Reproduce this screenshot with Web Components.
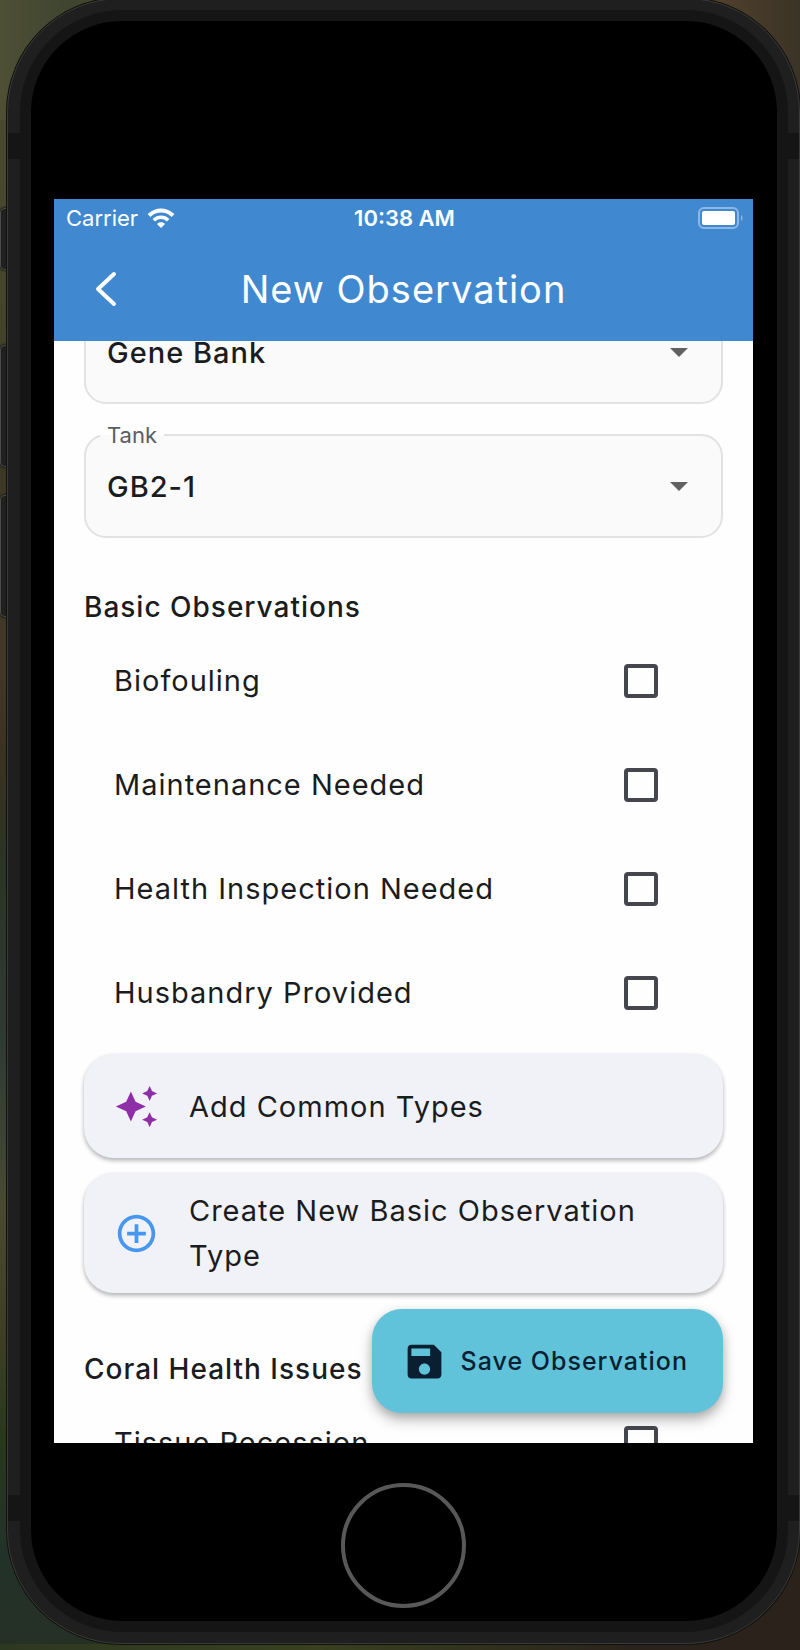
<!DOCTYPE html>
<html lang="en">
<head>
<meta charset="utf-8">
<meta name="viewport" content="width=device-width, initial-scale=1">
<title>New Observation</title>
<style>
  html { height: 100%; }
  body {
    margin: 0;
    height: 100%;
    overflow: hidden;
    font-family: Inter, "Noto Sans", sans-serif;
    color: #1b1c20;
  }
</style>
</head>
<body>
<phone-frame>
  <status-bar carrier="Carrier" time="10:38 AM"></status-bar>
  <app-header>New Observation</app-header>
  <observation-form>
    <select-field name="Structure" value="Gene Bank"></select-field>
    <select-field name="Tank" value="GB2-1" labelled></select-field>
    <form-section heading="Basic Observations">
      <check-row>Biofouling</check-row>
      <check-row>Maintenance Needed</check-row>
      <check-row>Health Inspection Needed</check-row>
      <check-row>Husbandry Provided</check-row>
      <action-card slot="actions">
        <svg slot="icon" viewBox="0 0 24 24" fill="#8e2fa8"><path d="M19 9l1.25-2.75L23 5l-2.750-1.250L19 1l-1.250 2.750L15 5l2.750 1.250L19 9zm-7.500.500L9 4 6.500 9.500 1 12l5.500 2.500L9 20l2.500-5.500L17 12l-5.500-2.500zM19 15l-1.250 2.750L15 19l2.750 1.250L19 23l1.250-2.750L23 19l-2.750-1.250L19 15z"/></svg>
        Add Common Types
      </action-card>
      <action-card slot="actions">
        <svg slot="icon" viewBox="0 0 24 24" fill="#4897ee"><path d="M13 7h-2v4H7v2h4v4h2v-4h4v-2h-4V7zm-1-5C6.480 2 2 6.480 2 12s4.480 10 10 10 10-4.480 10-10S17.520 2 12 2zm0 18c-4.410 0-8-3.590-8-8s3.590-8 8-8 8 3.590 8 8-3.590 8-8 8z"/></svg>
        Create New Basic Observation Type
      </action-card>
    </form-section>
    <form-section heading="Coral Health Issues">
      <check-row>Tissue Recession</check-row>
    </form-section>
  </observation-form>
  <save-button slot="floating">Save Observation</save-button>
</phone-frame>

<script>
  const define = (name, markup, setup) => {
    const template = document.createElement('template');
    template.innerHTML = markup;
    customElements.define(name, class extends HTMLElement {
      constructor() {
        super();
        this.attachShadow({ mode: 'open' }).append(template.content.cloneNode(true));
      }
      connectedCallback() {
        if (setup) setup(this, this.shadowRoot);
      }
    });
  };

  define('phone-frame', `
    <style>
      :host {
        display: grid;
        grid-template-columns: 7px minmax(0, 1fr);
        grid-template-rows: minmax(0, 1fr);
        box-sizing: border-box;
        height: 100vh;
        padding-bottom: 6px;
        background:
          linear-gradient(90deg, #2d3820, #38401f 40%, #2a221b 80%) bottom / 100% 6px no-repeat,
          linear-gradient(90deg, #4d5034 0, #3f4430 9%, transparent 16%) top / 100% 120px no-repeat,
          linear-gradient(90deg, transparent 78%, #55432c 87%, #3b3327 100%) top / 100% 120px no-repeat,
          linear-gradient(90deg, transparent 50%, #2a221b 50%),
          linear-gradient(#4a4b30, #45482d 16%, #3c3826 28%, #423828 40%, #3a3220 46%, #2c3424 52%, #2e3a34 63%, #484a32 73%, #3a3d24 82%, #26381c 88%, #22322a 94%, #263025);
      }
      .keys { display: flex; flex-direction: column; gap: 28px; padding-top: 208px; }
      .keys i {
        box-sizing: border-box; flex: none; height: 122px; width: 10px;
        background: #202020; border: 1px solid #4a4a48; border-right: 0;
        border-radius: 5px 0 0 5px; box-shadow: 0 0 2px 1px #1c1c14;
      }
      .keys .mute { height: 62px; margin-bottom: 47px; }
      .shell {
        position: relative; display: flex; box-sizing: border-box;
        margin-top: -2px; padding: 11px 11px 11px 12px;
        border: 1px solid #3a3a3a; border-radius: 114px;
        box-shadow: 0 0 0 1px #11120d;
        background:
          linear-gradient(#151515, #151515) 0 134px / 100% 26px no-repeat,
          linear-gradient(#151515, #151515) 0 calc(100% - 122px) / 100% 26px no-repeat,
          #1f1f1f;
      }
      .bezel {
        flex: 1; min-width: 0; display: flex; flex-direction: column;
        border: 11px solid #151515; border-radius: 102px; background: #000;
        padding: 178px 24px 0 23px;
      }
      .screen {
        position: relative; flex: 1; min-height: 0; overflow: hidden;
        display: flex; flex-direction: column; background: #fefefe;
      }
      .floating { position: absolute; right: 30px; bottom: 30px; }
      .chin { display: flex; justify-content: center; padding: 40px 0 13px; }
      .home {
        width: 125px; height: 125px; box-sizing: border-box; padding: 0;
        border: 4px solid #585858; border-radius: 50%; background: none;
      }
    </style>
    <div class="keys"><i class="mute"></i><i></i><i></i></div>
    <div class="shell">
      <div class="bezel">
        <main class="screen"><slot></slot><div class="floating"><slot name="floating"></slot></div></main>
        <div class="chin"><button class="home" aria-label="Home"></button></div>
      </div>
    </div>`);

  define('status-bar', `
    <style>
      :host {
        display: grid; grid-template-columns: 1fr auto 1fr; align-items: center;
        box-sizing: border-box; flex: none; height: 40px; padding: 0 10px 2px 12px;
        background: #4089d0; color: #fff; font-size: 22px; line-height: 28px;
      }
      .left { display: flex; align-items: center; gap: 9px; }
      .time { font-weight: 600; }
      svg { display: block; }
      .battery { justify-self: end; }
    </style>
    <div class="left"><span class="carrier"></span>
      <svg width="28" height="20" viewBox="0 0 28 20" fill="none" stroke="#fff">
        <path d="M2 7.500C9 .8 19 .8 26 7.500" stroke-width="4"/>
        <path d="M6.800 12.200c4.200-3.900 10.200-3.900 14.400 0" stroke-width="3.600"/>
        <path d="M14 20l-4-4c2-2.300 6-2.300 8 0z" fill="#fff" stroke="none"/>
      </svg>
    </div>
    <span class="time"></span>
    <svg class="battery" width="45" height="22" viewBox="0 0 45 22">
      <rect x="1" y="1" width="39" height="20" rx="5" fill="none" stroke="#8db8e3" stroke-width="2"/>
      <rect x="4" y="4" width="33" height="14" rx="2" fill="#fff"/>
      <path d="M43 8c2 1 2 5 0 6z" fill="#8db8e3"/>
    </svg>`, (host, root) => {
      root.querySelector('.carrier').textContent = host.getAttribute('carrier');
      root.querySelector('.time').textContent = host.getAttribute('time');
    });

  define('app-header', `
    <style>
      :host {
        display: grid; grid-template-columns: 104px 1fr 104px; align-items: center;
        box-sizing: border-box; flex: none; height: 102px; padding-bottom: 2px;
        background: #4089d0; color: #fff;
      }
      button { justify-self: center; padding: 0; border: 0; background: none; }
      svg { display: block; }
      h1 { margin: 0; text-align: center; font-size: 38px; line-height: 48px; font-weight: 400; letter-spacing: 1px; }
    </style>
    <button aria-label="Back"><svg width="24" height="36" viewBox="0 0 24 36" fill="none" stroke="#fff" stroke-width="4" stroke-linecap="round" stroke-linejoin="round"><path d="M20 3L4 18l16 15"/></svg></button>
    <h1><slot></slot></h1>`);

  define('observation-form', `
    <style>
      :host { display: block; flex: 1; min-height: 0; overflow: hidden; }
      form { display: flex; flex-direction: column; gap: 30px; margin-top: -41px; padding: 0 30px; }
    </style>
    <form><slot></slot></form>`);

  define('select-field', `
    <style>
      :host { display: block; position: relative; height: 104px; }
      select {
        appearance: none; box-sizing: border-box; width: 100%; height: 100%; margin: 0;
        padding: 2px 64px 0 21px; border: 2px solid #e2e2e2; border-radius: 22px;
        background: #fafafa; color: #1b1c20; font: 500 29px/36px Inter, sans-serif; letter-spacing: 1px;
      }
      label {
        position: absolute; left: 16px; top: -13px; padding: 0 7px;
        background: linear-gradient(#fefefe 50%, #fafafa 50%);
        color: #5a5d63; font-size: 22px; line-height: 28px;
      }
      label:empty { display: none; }
      svg { position: absolute; right: 35px; top: 48px; pointer-events: none; }
    </style>
    <select id="field"><option></option></select>
    <label for="field"></label>
    <svg width="18" height="9" viewBox="0 0 18 9"><path d="M0 0h18L9 9z" fill="#616161"/></svg>`, (host, root) => {
      root.querySelector('option').textContent = host.getAttribute('value');
      const name = host.getAttribute('name');
      if (host.hasAttribute('labelled')) root.querySelector('label').textContent = name;
      else root.querySelector('select').setAttribute('aria-label', name);
    });

  define('form-section', `
    <style>
      :host { display: block; padding-top: 19px; }
      h2 { margin: 0 0 2px; font-size: 28px; line-height: 40px; font-weight: 500; letter-spacing: 1px; }
      .actions { display: flex; flex-direction: column; gap: 15px; padding: 9px 0 7px; }
    </style>
    <h2></h2>
    <slot></slot>
    <div class="actions"><slot name="actions"></slot></div>`, (host, root) => {
      root.querySelector('h2').textContent = host.getAttribute('heading');
    });

  define('check-row', `
    <style>
      :host { display: block; }
      label {
        display: flex; align-items: center; justify-content: space-between;
        height: 104px; padding: 0 65px 0 30px; font-size: 29px; line-height: 36px; letter-spacing: 1px;
      }
      input {
        appearance: none; box-sizing: border-box; flex: none; width: 34px; height: 34px; margin: 0;
        border: 4px solid #46464f; border-radius: 4px;
      }
    </style>
    <label><span><slot></slot></span><input type="checkbox"></label>`);

  define('action-card', `
    <style>
      :host { display: block; }
      button {
        display: flex; align-items: center; gap: 30px; box-sizing: border-box; width: 100%;
        min-height: 104px; padding: 15px 30px; border: 0; border-radius: 30px;
        background: #f1f2f8; box-shadow: 0 3px 4px rgba(0,0,0,.22), 0 1px 4px rgba(0,0,0,.1);
        color: inherit; font: 400 29px/45px Inter, sans-serif; letter-spacing: 1px; text-align: left;
      }
      ::slotted(svg) { display: block; width: 45px; height: 45px; }
      .icon { flex: none; }
    </style>
    <button type="button"><span class="icon"><slot name="icon"></slot></span><span><slot></slot></span></button>`);

  define('save-button', `
    <style>
      :host { display: block; }
      button {
        display: flex; align-items: center; gap: 14px; height: 104px; padding: 0 35px 0 30px;
        border: 0; border-radius: 30px; background: #60c3d9; color: #0b1f33;
        box-shadow: 0 7px 14px rgba(0,0,0,.26), 0 3px 8px rgba(0,0,0,.12);
        font: 500 25px/32px Inter, sans-serif; letter-spacing: 1px; white-space: nowrap;
      }
      svg { display: block; flex: none; }
    </style>
    <button type="submit">
      <svg width="45" height="45" viewBox="0 0 24 24" fill="#0b1f33"><path d="M17 3H5c-1.110 0-2 .9-2 2v14c0 1.100.890 2 2 2h14c1.100 0 2-.9 2-2V7l-4-4zm-5 16c-1.660 0-3-1.340-3-3s1.340-3 3-3 3 1.340 3 3-1.340 3-3 3zm3-10H5V5h10v4z"/></svg>
      <span><slot></slot></span>
    </button>`);
</script>
</body>
</html>
